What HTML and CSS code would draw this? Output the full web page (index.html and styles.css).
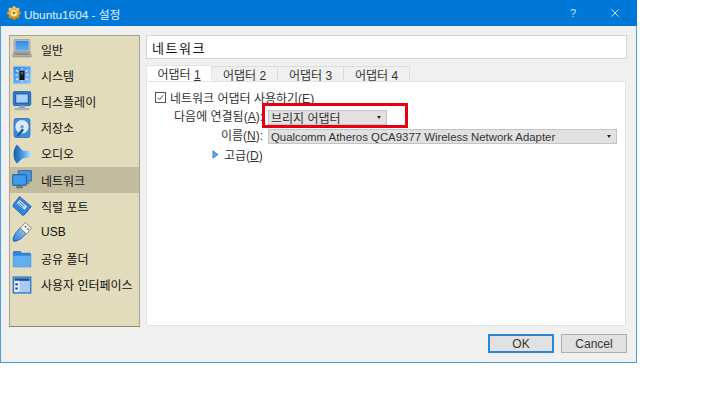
FILE: index.html
```html
<!DOCTYPE html>
<html lang="ko">
<head>
<meta charset="utf-8">
<title>Ubuntu1604 - 설정</title>
<link rel="stylesheet" href="styles.css">
</head>
<body>
<div class="window">
  <header class="titlebar">
    <svg class="app-icon" viewBox="0 0 14 14"><g fill="#eda62a"><circle cx="7" cy="7" r="5.6"/><circle cx="7" cy="1.6" r="1.6" fill="#f6c858"/><circle cx="7" cy="12.4" r="1.6" fill="#d08a18"/><circle cx="1.6" cy="7" r="1.6"/><circle cx="12.4" cy="7" r="1.6" fill="#dc961c"/><circle cx="3.2" cy="3.2" r="1.6" fill="#f6c858"/><circle cx="10.8" cy="3.2" r="1.6" fill="#f6c858"/><circle cx="3.2" cy="10.8" r="1.6" fill="#d08a18"/><circle cx="10.8" cy="10.8" r="1.6" fill="#d08a18"/></g><circle cx="7" cy="7" r="3.2" fill="#fbe6a8"/><circle cx="7" cy="7" r="1.3" fill="#a06a14"/></svg>
    <span class="title">Ubuntu1604 - 설정</span>
    <span class="help">?</span>
    <svg class="close" viewBox="0 0 10 10"><path d="M.5.5l9 9M9.5.5l-9 9" stroke="#fff" stroke-width="1" fill="none"/></svg>
  </header>
  <div class="content">
    <div class="upper">
      <nav class="sidebar">
        <div class="item">
          <svg class="icon" viewBox="0 0 24 24"><defs><linearGradient id="scr" x1="0" y1="0" x2="0" y2="1"><stop offset="0" stop-color="#2f86e6"/><stop offset="1" stop-color="#66adf2"/></linearGradient></defs><rect x="2.5" y=".5" width="19" height="15" rx="1" fill="#d4d4ce" stroke="#96968e"/><rect x="4" y="2" width="16" height="12" fill="url(#scr)"/><path d="M2.5 15.500h19l1.500 3v3H1v-3z" fill="#b0b0aa" stroke="#77776f" stroke-width=".6"/><rect x="3" y="17.500" width="18" height="1.200" fill="#6e6e68"/></svg>
          <span>일반</span>
        </div>
        <div class="item">
          <svg class="icon" viewBox="0 0 24 24"><defs><linearGradient id="sys" x1="0" y1="0" x2="1" y2="1"><stop offset="0" stop-color="#2f86ea"/><stop offset="1" stop-color="#8cc4f6"/></linearGradient></defs><rect x="1.500" y="1.500" width="21" height="21" rx="1" fill="url(#sys)" stroke="#a8c8ea"/><path d="M5 6l2.500 2M19 6l-2.500 2M5 18l2.500-2M19 18l-2.500-2M4 12h3M17 12h3M12 3.500v2M12 18.500v2" stroke="#e6f2fd" stroke-width="1.500"/><rect x="9" y="7" width="6" height="11" fill="#161616"/><rect x="10.500" y="8.500" width="3" height="3" fill="#5c5c5c"/></svg>
          <span>시스템</span>
        </div>
        <div class="item">
          <svg class="icon" viewBox="0 0 24 24"><rect x="1.500" y=".5" width="21" height="17" rx="2" fill="#2a82de" stroke="#1d5aa8"/><rect x="4.500" y="3.500" width="15" height="11" fill="#a9d0f7" stroke="#15407a"/><path d="M9 17.500h6l1 3H8z" fill="#8fa6c0"/><rect x="3" y="20.500" width="18" height="2.500" rx="1" fill="#aeaea8"/></svg>
          <span>디스플레이</span>
        </div>
        <div class="item">
          <svg class="icon" viewBox="0 0 24 24"><rect x="2.500" y=".5" width="19" height="23" rx="2.500" fill="#3d8ce0" stroke="#2a6cb8"/><circle cx="12" cy="10.500" r="8" fill="#dcebfa"/><circle cx="12" cy="10.500" r="2.200" fill="#5ea4e8"/><path d="M5 21.500l7-9 2.500 2L8 22.500z" fill="#1a5aa6"/></svg>
          <span>저장소</span>
        </div>
        <div class="item">
          <svg class="icon" viewBox="0 0 24 24"><defs><linearGradient id="sp" x1="0" y1="0" x2="1" y2="0"><stop offset="0" stop-color="#1558a8"/><stop offset=".55" stop-color="#4ea0ee"/><stop offset="1" stop-color="#c8e2fa"/></linearGradient></defs><path d="M6 .5l7 7.500h10v8l-10 1-7 6.500C.5 18 .5 6 6 .5z" fill="url(#sp)"/></svg>
          <span>오디오</span>
        </div>
        <div class="item selected">
          <svg class="icon" viewBox="0 0 24 24"><rect x="7.500" y=".5" width="16" height="13" rx="1" fill="#4a92dc" stroke="#28609e"/><path d="M14 17h7v-2h-7z" fill="#77776f"/><rect x=".5" y="5.500" width="17" height="13" rx="1" fill="#2e8be8" stroke="#1d5aa0"/><rect x="2" y="7" width="14" height="10" fill="#3f9cf0"/><rect x="5" y="19" width="8" height="3" fill="#77776f"/></svg>
          <span>네트워크</span>
        </div>
        <div class="item">
          <svg class="icon" viewBox="0 0 24 24"><path d="M9 .5l14 12-7 9-3 2-12-11 1-3z" fill="#2f86e2" stroke="#1c5ca6"/><path d="M9 4l10 8.500-4 5-10-8.500z" fill="#c6e0fa" stroke="#1c5ca6" stroke-width=".8"/><path d="M9 7l6 5M7.500 9l6 5" stroke="#1c5ca6" stroke-width="1"/></svg>
          <span>직렬 포트</span>
        </div>
        <div class="item">
          <svg class="icon" viewBox="0 0 24 24"><defs><linearGradient id="ub" x1="0" y1="1" x2="1" y2="0"><stop offset="0" stop-color="#2c7cd6"/><stop offset="1" stop-color="#9ccdf8"/></linearGradient></defs><path d="M10 7l7 7-6 6-6 3H1.500v-4l3-6z" fill="url(#ub)" stroke="#1c5ca6"/><path d="M16 .5l7.500 7-6 7-7.500-7z" fill="#f6f6f4" stroke="#77776f"/><path d="M15.500 5l1.500 1.500M18.500 8l1.500 1.500" stroke="#333" stroke-width="1.500"/></svg>
          <span>USB</span>
        </div>
        <div class="item">
          <svg class="icon" viewBox="0 0 24 24"><path d="M1 4.500a2 2 0 0 1 2-2h7l2 2h9a2 2 0 0 1 2 2V22H1z" fill="#2f80d8"/><path d="M1.500 8h21v13.500h-21z" fill="#62aef4"/></svg>
          <span>공유 폴더</span>
        </div>
        <div class="item">
          <svg class="icon" viewBox="0 0 24 24"><rect x="1.500" y="2.500" width="21" height="19" fill="#a8cbf2" stroke="#2f76c8" stroke-width="1.600"/><rect x="3" y="4" width="18" height="3" fill="#12509e"/><rect x="3" y="7" width="6" height="13" fill="#eaf2fb"/><rect x="4" y="10" width="3" height="2.500" fill="#12509e"/><rect x="4" y="15" width="3" height="2.500" fill="#12509e"/></svg>
          <span>사용자 인터페이스</span>
        </div>
      </nav>
      <main class="main">
        <div class="page-title">네트워크</div>
        <div class="tabs">
          <div class="tab active"><span>어댑터 <u>1</u></span></div>
          <div class="tab"><span>어댑터 <u>2</u></span></div>
          <div class="tab"><span>어댑터 <u>3</u></span></div>
          <div class="tab"><span>어댑터 <u>4</u></span></div>
        </div>
        <section class="panel">
          <label class="check-row"><span class="checkbox"><svg viewBox="0 0 10 10"><path d="M2 5l2 2.200L8 2.500" stroke="#333" stroke-width="1" fill="none"/></svg></span><span>네트워크 어댑터 사용하기(<u>E</u>)</span></label>
          <div class="form">
            <span class="label">다음에 연결됨(<u>A</u>):</span>
            <div class="combo short"><span>브리지 어댑터</span><i class="arrow"></i></div>
            <span class="label">이름(<u>N</u>):</span>
            <div class="combo"><span>Qualcomm Atheros QCA9377 Wireless Network Adapter</span><i class="arrow"></i></div>
            <span class="spacer"></span>
            <div class="advanced"><svg class="tri" viewBox="0 0 8 10"><path d="M1 .8l6 4.200-6 4.200z" fill="#58a6ee" stroke="#2a78c8" stroke-width=".8"/></svg><span>고급(<u>D</u>)</span></div>
          </div>
          <div class="highlight"></div>
        </section>
      </main>
    </div>
    <footer class="buttons">
      <button class="btn default">OK</button>
      <button class="btn">Cancel</button>
    </footer>
  </div>
</div>
</body>
</html>
```
FILE: styles.css
```css
* { box-sizing: border-box; }
html, body { margin: 0; padding: 0; background: #fff; }
body { width: 720px; height: 404px; overflow: hidden; font-family: "Liberation Sans", "Noto Sans CJK KR", sans-serif; font-size: 12px; color: #222; }
u { text-decoration: underline; }
.window { width: 637px; height: 363px; display: flex; flex-direction: column; background: #f0f0f0; border: 1px solid #4a9fe0; border-top: 0; }
.titlebar { height: 26px; flex: none; margin: 0 -1px; background: #0078d7; display: flex; align-items: center; padding-left: 7px; color: #fff; }
.app-icon { width: 14px; height: 14px; margin-right: 3px; }
.title { font-size: 11.8px; color: #e4f1fb; flex: 1; }
.help { font-size: 11px; margin-right: 35px; color: #cfe4f6; }
.close { width: 8px; height: 8px; margin-right: 18px; }
.content { flex: 1; display: flex; flex-direction: column; padding: 9px 9px 8px 8px; }
.upper { display: flex; gap: 6px; height: 292px; }
.sidebar { width: 131px; flex: none; background: #e2dcbc; border: 1px solid #a8a48a; border-bottom-color: #8c8872; display: flex; flex-direction: column; }
.item { height: 26.2px; flex: none; display: flex; align-items: center; gap: 9px; padding-left: 2px; color: #111; }
.item.selected { background: #c1bb9f; }
.icon { width: 20px; height: 20px; flex: none; }
.main { flex: 1; min-width: 0; display: flex; flex-direction: column; }
.page-title { height: 24px; flex: none; margin-bottom: 7px; width: 481px; background: #fff; border: 1px solid #d5d5d5; display: flex; align-items: center; padding-left: 5px; font-size: 13px; letter-spacing: 1.5px; color: #111; }
.tabs { display: flex; height: 15px; flex: none; align-items: flex-end; }
.tab { width: 66px; height: 15px; background: #f0f0f0; border: 1px solid #dcdcdc; border-left: 0; border-bottom: 0; display: flex; align-items: center; justify-content: center; font-size: 12px; color: #333; }
.tab:first-child { border-left: 1px solid #dcdcdc; }
.tab.active { background: #fff; height: 16px; border-color: #e4e4e4; }
.panel { position: relative; width: 480px; height: 245px; background: #fff; border: 1px solid #e2e2e2; padding: 8px 0 0 8px; }
.check-row { display: flex; align-items: center; height: 15px; gap: 4px; color: #333; }
.checkbox { width: 11px; height: 11px; border: 1px solid #555; display: flex; background: #fff; }
.checkbox svg { width: 9px; height: 9px; }
.form { display: grid; grid-template-columns: 108px 1fr; column-gap: 5px; row-gap: 4px; margin-top: 5px; align-items: center; color: #333; }
.label { text-align: right; white-space: nowrap; height: 15px; line-height: 15px; }
.combo { height: 15px; width: 349px; background: #e1e1e1; border: 1px solid #c4c4c4; display: flex; align-items: center; justify-content: space-between; padding: 0 5px 0 2px; font-size: 11.4px; color: #333; white-space: nowrap; }
.combo.short { width: 119px; font-size: 12px; }
.arrow { width: 0; height: 0; border: 2.500px solid transparent; border-top: 3px solid #222; border-bottom: 0; flex: none; }
.advanced { display: flex; align-items: center; margin: -1px 0 0 -56px; gap: 5px; height: 15px; }
.tri { width: 7px; height: 9px; }
.highlight { position: absolute; left: 115px; top: 21px; width: 146px; height: 25px; border: 3px solid #e60012; }
.buttons { display: flex; justify-content: flex-end; gap: 7px; padding-top: 7px; }
.btn { width: 66px; height: 19px; padding: 0; background: #e1e1e1; border: 1px solid #adadad; font-family: "Liberation Sans", sans-serif; font-size: 12px; color: #333; }
.btn.default { border: 2px solid #2d86d2; }
```
